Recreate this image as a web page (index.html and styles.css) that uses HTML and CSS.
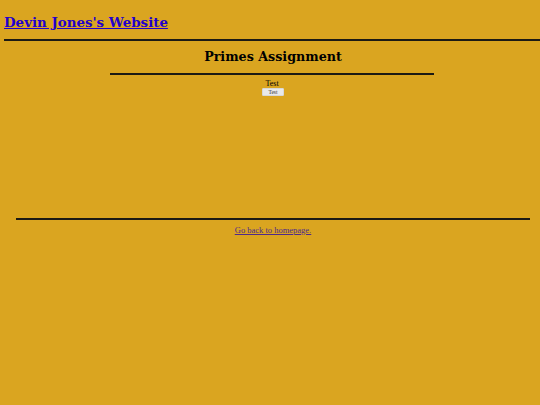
FILE: index.html
```html
<!DOCTYPE html>
<html>
<head>
<meta charset="utf-8">
<title>Primes Assignment</title>
<link rel="stylesheet" href="styles.css">
</head>
<body>
<header class="site-header">
  <h1 class="site-title"><a href="#">Devin Jones's Website</a></h1>
</header>
<hr class="rule rule-top">
<main class="content">
  <h2 class="page-title">Primes Assignment</h2>
  <hr class="rule rule-mid">
  <p class="label">Test</p>
  <button class="btn" type="button">Test</button>
  <div class="output"></div>
</main>
<footer class="site-footer">
  <hr class="rule rule-bottom">
  <a class="back-link" href="#">Go back to homepage.</a>
</footer>
</body>
</html>
```
FILE: styles.css
```css
html, body {
  margin: 0;
  padding: 0;
}
body {
  background: #daa520;
  font-family: "DejaVu Serif", serif;
  color: #000;
  padding-left: 4px;
}
.site-header {
  padding-top: 14px;
  height: 24px;
}
.site-title {
  margin: 0;
  font-size: 13.4px;
  line-height: 16px;
  font-weight: bold;
}
.site-title a {
  color: #2200cc;
}
.rule {
  border: 0;
  height: 2px;
  background: #1c1a14;
  margin: 0;
}
.rule-top {
  margin-top: 1px;
}
.content {
  display: flex;
  flex-direction: column;
  align-items: center;
}
.page-title {
  margin: 0;
  padding-top: 8px;
  padding-left: 2px;
  font-size: 12.7px;
  line-height: 16px;
  font-weight: bold;
}
.rule-mid {
  width: 324px;
  margin-top: 8px;
}
.label {
  margin: 4px 0 0;
  font-family: "Liberation Serif", serif;
  font-size: 8px;
  line-height: 9px;
}
.btn {
  font-family: "Liberation Serif", serif;
  font-size: 5.5px;
  line-height: 6px;
  padding: 0 5px;
  margin: 0 0 0 2px;
  background: #e9e9e9;
  border: 1px solid #d8d8d8;
  border-radius: 1px;
  color: #333;
}
.output {
  height: 122px;
}
.site-footer {
  display: flex;
  flex-direction: column;
  align-items: center;
}
.rule-bottom {
  align-self: stretch;
  margin: 0 10px 0 12px;
}
.back-link {
  margin-top: 6px;
  padding-left: 2px;
  font-family: "Liberation Serif", serif;
  font-size: 8.5px;
  line-height: 9px;
  color: #4f2a8a;
}
```
